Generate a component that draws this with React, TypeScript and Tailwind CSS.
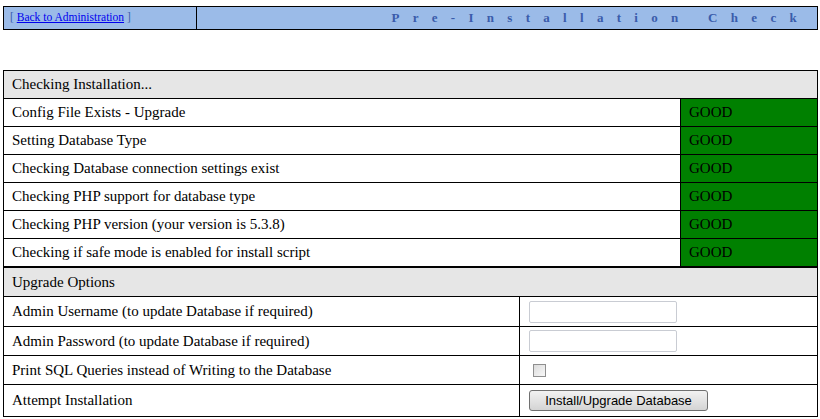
import React, { useState } from "react";

// installer checks shown in the first table
interface Check {
    label: string;
    status: string;
}

const checks: Check[] = [
    { label: "Config File Exists - Upgrade", status: "GOOD" },
    { label: "Setting Database Type", status: "GOOD" },
    { label: "Checking Database connection settings exist", status: "GOOD" },
    { label: "Checking PHP support for database type", status: "GOOD" },
    { label: "Checking PHP version (your version is 5.3.8)", status: "GOOD" },
    { label: "Checking if safe mode is enabled for install script", status: "GOOD" },
];

const cell = "border border-black px-2 py-0 text-left align-middle";

export default function App() {
    const [username, setUsername] = useState("");
    const [password, setPassword] = useState("");
    const [printSql, setPrintSql] = useState(false);

    return (
        <div
            className="min-h-screen bg-white px-[3px] pt-[6px] text-black"
            style={{ fontFamily: '"Liberation Serif", "Times New Roman", serif' }}
        >
            <table className="w-[815px] border-collapse bg-[#9bbbe8]">
                <tbody>
                    <tr>
                        <td className="h-[23px] w-[193px] border border-black px-[6px] text-[11.5px] text-[#3a5cab]">
                            [ <a href="#" className="text-[#0000ee] underline">Back to Administration</a> ]
                        </td>
                        <td className="border border-black pr-[7px] text-right text-[13px] font-bold tracking-[13.3px] text-[#3a5cab]">
                            Pre-Installation Check
                        </td>
                    </tr>
                </tbody>
            </table>

            <table className="mt-[40px] w-[815px] border-collapse text-[15px]">
                <tbody>
                    <tr className="bg-[#e6e6e6]">
                        <td colSpan={2} className={cell + " h-[28px]"}>
                            Checking Installation...
                        </td>
                    </tr>
                    {checks.map((c) => (
                        <tr key={c.label}>
                            <td className={cell + " h-[28px]"}>{c.label}</td>
                            <td className={cell + " w-[137px] bg-[#008000]"}>{c.status}</td>
                        </tr>
                    ))}
                </tbody>
            </table>

            <table className="w-[815px] border-collapse text-[15px]">
                <tbody>
                    <tr className="bg-[#e6e6e6]">
                        <td colSpan={2} className={cell + " h-[29px]"}>
                            Upgrade Options
                        </td>
                    </tr>
                    <tr>
                        <td className={cell + " h-[30px] w-[516px]"}>
                            Admin Username (to update Database if required)
                        </td>
                        <td className={cell + " px-[9px]"}>
                            <input
                                type="text"
                                value={username}
                                onChange={(e) => setUsername(e.target.value)}
                                className="block h-[22px] w-[148px] rounded-[2px] border border-[#c9ccd3] bg-white outline-none"
                            />
                        </td>
                    </tr>
                    <tr>
                        <td className={cell + " h-[29px]"}>
                            Admin Password (to update Database if required)
                        </td>
                        <td className={cell + " px-[9px]"}>
                            <input
                                type="password"
                                value={password}
                                onChange={(e) => setPassword(e.target.value)}
                                className="block h-[22px] w-[148px] rounded-[2px] border border-[#c9ccd3] bg-white outline-none"
                            />
                        </td>
                    </tr>
                    <tr>
                        <td className={cell + " h-[29px]"}>
                            Print SQL Queries instead of Writing to the Database
                        </td>
                        <td className={cell + " px-[13px]"}>
                            <input
                                type="checkbox"
                                checked={printSql}
                                onChange={(e) => setPrintSql(e.target.checked)}
                                className="block h-[13px] w-[13px] appearance-none border border-[#8f8f8f] bg-gradient-to-br from-[#dcdcdc] to-[#f8f8f8]"
                            />
                        </td>
                    </tr>
                    <tr>
                        <td className={cell + " h-[32px]"}>Attempt Installation</td>
                        <td className={cell + " px-[9px]"}>
                            <button
                                type="button"
                                className="block h-[21px] w-[179px] rounded-[3px] border border-[#707070] bg-gradient-to-b from-[#f2f2f2] to-[#d4d4d4] text-[13px] text-black"
                                style={{ fontFamily: '"Liberation Sans", Arial, sans-serif' }}
                            >
                                Install/Upgrade Database
                            </button>
                        </td>
                    </tr>
                </tbody>
            </table>
        </div>
    );
}
